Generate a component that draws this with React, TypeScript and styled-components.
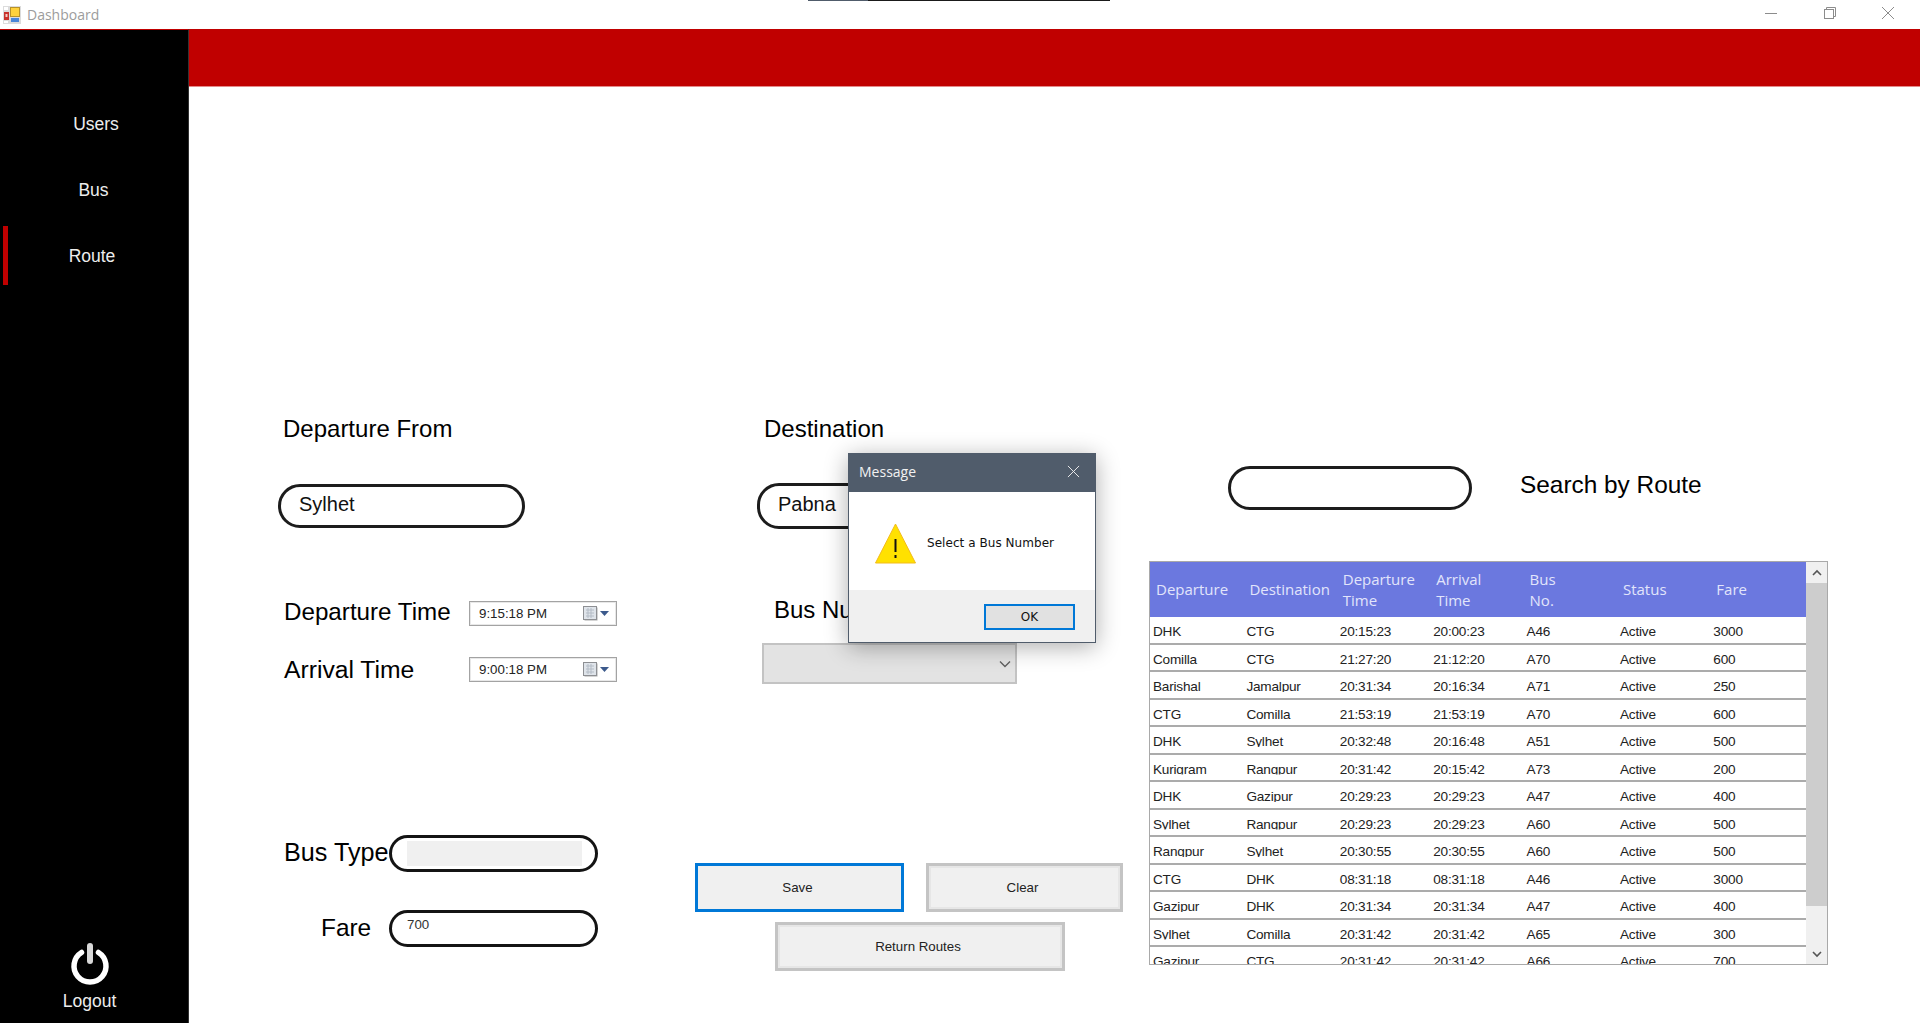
import styled, { createGlobalStyle } from 'styled-components'

type RouteRow = [string, string, string, string, string, string, string]

const routes: RouteRow[] = [
  ['DHK', 'CTG', '20:15:23', '20:00:23', 'A46', 'Active', '3000'],
  ['Comilla', 'CTG', '21:27:20', '21:12:20', 'A70', 'Active', '600'],
  ['Barishal', 'Jamalpur', '20:31:34', '20:16:34', 'A71', 'Active', '250'],
  ['CTG', 'Comilla', '21:53:19', '21:53:19', 'A70', 'Active', '600'],
  ['DHK', 'Sylhet', '20:32:48', '20:16:48', 'A51', 'Active', '500'],
  ['Kurigram', 'Rangpur', '20:31:42', '20:15:42', 'A73', 'Active', '200'],
  ['DHK', 'Gazipur', '20:29:23', '20:29:23', 'A47', 'Active', '400'],
  ['Sylhet', 'Rangpur', '20:29:23', '20:29:23', 'A60', 'Active', '500'],
  ['Rangpur', 'Sylhet', '20:30:55', '20:30:55', 'A60', 'Active', '500'],
  ['CTG', 'DHK', '08:31:18', '08:31:18', 'A46', 'Active', '3000'],
  ['Gazipur', 'DHK', '20:31:34', '20:31:34', 'A47', 'Active', '400'],
  ['Sylhet', 'Comilla', '20:31:42', '20:31:42', 'A65', 'Active', '300'],
  ['Gazipur', 'CTG', '20:31:42', '20:31:42', 'A66', 'Active', '700'],
]

const columns = [
  'Departure',
  'Destination',
  'Departure Time',
  'Arrival Time',
  'Bus No.',
  'Status',
  'Fare',
]

const GlobalStyle = createGlobalStyle`
  html, body {
    margin: 0;
    padding: 0;
    height: 100%;
    overflow: hidden;
    background: #fff;
    font-family: 'Liberation Sans', Arial, sans-serif;
  }
  * {
    box-sizing: border-box;
  }
`

const Window = styled.div`
  position: relative;
  width: 1920px;
  height: 1023px;
  display: flex;
  flex-direction: column;
  overflow: hidden;
`

const TitleBar = styled.div`
  position: relative;
  height: 29px;
  flex: none;
  display: flex;
  align-items: center;
  padding-left: 3px;
  background: #fff;
`

const TitleText = styled.span`
  margin-left: 6px;
  font-family: 'Open Sans', sans-serif;
  font-size: 14px;
  color: #9c9c9c;
`

const TopEdge = styled.div`
  position: absolute;
  left: 808px;
  top: 0;
  width: 302px;
  height: 1px;
  background: linear-gradient(90deg, #505c6b 0 60px, #1a1a1a 60px);
`

const WindowControls = styled.div`
  margin-left: auto;
  display: flex;
  padding: 0 25px 3px 0;
  gap: 44.5px;
`

const Body = styled.div`
  flex: 1;
  display: flex;
  min-height: 0;
`

const Sidebar = styled.nav`
  width: 189px;
  flex: none;
  padding-top: 61px;
  display: flex;
  flex-direction: column;
  background: #000;
  border-top: 1px solid #c00000;
  border-right: 1px solid #333;
`

const NavItem = styled.div<{ $shift: number; $active?: boolean }>`
  position: relative;
  height: 66px;
  display: flex;
  align-items: center;
  justify-content: center;
  font-size: 17.5px;
  color: #ededed;
  padding-left: ${(props) => (props.$shift > 0 ? props.$shift : 0)}px;
  padding-right: ${(props) => (props.$shift < 0 ? -props.$shift : 0)}px;

  &::before {
    content: '';
    display: ${(props) => (props.$active ? 'block' : 'none')};
    position: absolute;
    left: 3px;
    top: 3px;
    width: 5px;
    height: 59px;
    background: #c00000;
  }
`

const Logout = styled.div`
  margin-top: auto;
  padding: 0 9px 11px 0;
  display: flex;
  flex-direction: column;
  align-items: center;
  gap: 6px;
  font-size: 17.5px;
  color: #ededed;
`

const Main = styled.main`
  flex: 1;
  min-width: 0;
  display: flex;
  flex-direction: column;
`

const RedBar = styled.header`
  height: 58px;
  flex: none;
  background: #c00000;
  border-bottom: 1px solid #e58a8a;
`

const Content = styled.div`
  flex: 1;
  display: grid;
  grid-template-columns: 417px 454px 691px;
  padding: 324px 0 0 89px;
`

const Column = styled.section`
  display: flex;
  flex-direction: column;
  align-items: flex-start;
`

const FieldLabel = styled.label<{ $indent?: number; $top?: number; $size?: number }>`
  display: block;
  margin-left: ${(props) => props.$indent ?? 0}px;
  margin-top: ${(props) => props.$top ?? 0}px;
  font-size: ${(props) => props.$size ?? 24}px;
  line-height: 36px;
  color: #000;
  white-space: nowrap;
`

const Pill = styled.div<{ $width: number; $height: number; $top: number; $indent?: number }>`
  width: ${(props) => props.$width}px;
  height: ${(props) => props.$height}px;
  margin-top: ${(props) => props.$top}px;
  margin-left: ${(props) => props.$indent ?? 0}px;
  flex: none;
  display: flex;
  align-items: center;
  padding: 0 0 3px 18px;
  border: 3px solid #1c1c1c;
  border-radius: 22px;
  background: #fff;
  font-size: 20px;
  color: #111;
`

const TimeRow = styled.div<{ $top: number }>`
  display: flex;
  align-items: center;
  height: 25px;
  margin-top: ${(props) => props.$top}px;
  padding-left: 6px;
`

const TimeLabel = styled(FieldLabel)<{ $raise: number }>`
  width: 185px;
  line-height: 25px;
  position: relative;
  top: ${(props) => -props.$raise}px;
`

const TimePicker = styled.div`
  width: 148px;
  height: 25px;
  display: flex;
  align-items: center;
  padding: 0 7px 0 9px;
  border: 1px solid #a3a3a3;
  box-shadow: inset 0 0 0 1px #e8e8e8;
  font-size: 13.3px;
  color: #222;
`

const TimeValue = styled.span`
  flex: 1;
`

const FormRow = styled.div<{ $top: number }>`
  display: flex;
  align-items: center;
  height: 37px;
  margin-top: ${(props) => props.$top}px;
  padding-left: 6px;
`

const RowLabel = styled(FieldLabel)<{ $raise: number; $width: number }>`
  width: ${(props) => props.$width}px;
  position: relative;
  top: ${(props) => -props.$raise}px;
`

const RoundInput = styled.div<{ $align?: string }>`
  width: 209px;
  height: 37px;
  padding: 0 13px 0 15px;
  display: flex;
  align-items: ${(props) => props.$align ?? 'center'};
  border: 3px solid #141414;
  border-radius: 19px;
  font-size: 13.3px;
  color: #333;
`

const DisabledFill = styled.div`
  width: 100%;
  height: 25px;
  background: #f0f0f0;
`

const FareValue = styled.span`
  margin-top: 4px;
`

const ComboBox = styled.div`
  width: 255px;
  height: 41px;
  margin: 15px 0 0 67px;
  display: flex;
  align-items: center;
  justify-content: flex-end;
  padding-right: 4px;
  background: #e3e3e3;
  border: 2px solid #c3c3c3;
`

const ActionRow = styled.div`
  display: flex;
  gap: 22px;
  margin-top: 179px;
`

const ActionButton = styled.button<{ $width: number; $focused?: boolean; $indent?: number; $top?: number }>`
  width: ${(props) => props.$width}px;
  height: 49px;
  margin-left: ${(props) => props.$indent ?? 0}px;
  margin-top: ${(props) => props.$top ?? 0}px;
  padding: 0 4px 0 0;
  background: #f0f0f0;
  border: ${(props) => (props.$focused ? '3px solid #0078d7' : '3px solid #c4c4c4')};
  box-shadow: ${(props) => (props.$focused ? 'none' : 'inset 0 0 0 2px #e6e6e6')};
  font-family: 'Liberation Sans', Arial, sans-serif;
  font-size: 13.3px;
  color: #222;
`

const SearchRow = styled.div`
  display: flex;
  align-items: flex-start;
  margin-top: 55px;
`

const SearchLabel = styled(FieldLabel)`
  margin: 1px 0 0 48px;
  font-size: 24.4px;
`

const Grid = styled.div`
  display: flex;
  width: 679px;
  height: 404px;
  margin-top: 51px;
  border: 1px solid #a9a9a9;
  overflow: hidden;
`

const Rows = styled.div`
  width: 656px;
  flex: none;
  overflow: hidden;
`

const HeaderRow = styled.div`
  display: grid;
  grid-template-columns: repeat(7, 93.4px);
  height: 55px;
  align-items: center;
  background: #6b78df;
`

const HeaderCell = styled.div`
  width: min-content;
  padding-left: 6px;
  font-family: 'Open Sans', sans-serif;
  font-size: 15px;
  line-height: 21px;
  color: #e2e5fb;
`

const DataRow = styled.div`
  display: grid;
  grid-template-columns: repeat(7, 93.4px);
  height: 27.5px;
  border-bottom: 2px solid #ababab;
  background: #fff;
`

// the grid cuts descenders off in the original app
const DataCell = styled.div`
  height: 20px;
  margin-top: 5px;
  padding-left: 3px;
  clip-path: inset(0 0 5px 0);
  font-size: 13.6px;
  line-height: 20px;
  letter-spacing: -0.2px;
  color: #222;
`

const ScrollBar = styled.div`
  flex: 1;
  display: flex;
  flex-direction: column;
  align-items: center;
  background: #f0f0f0;
`

const ScrollArrow = styled.div<{ $bottom?: boolean }>`
  height: 21px;
  flex: none;
  display: flex;
  align-items: center;
  justify-content: center;
  margin-top: ${(props) => (props.$bottom ? 'auto' : '0')};
`

const ScrollThumb = styled.div`
  width: 100%;
  height: 323px;
  background: #cdcdcd;
`

const Dialog = styled.div`
  position: absolute;
  left: 848px;
  top: 453px;
  width: 248px;
  height: 190px;
  display: flex;
  flex-direction: column;
  background: #fff;
  border: 1px solid #505c6b;
  box-shadow: 0 4px 22px rgba(0, 0, 0, 0.32);
`

const DialogTitle = styled.div`
  height: 38px;
  flex: none;
  display: flex;
  align-items: center;
  justify-content: space-between;
  padding: 0 15px 3px 10px;
  background: #505c6b;
  font-family: 'Open Sans', sans-serif;
  font-size: 14px;
  color: #f2f2f2;
`

const DialogBody = styled.div`
  flex: 1;
  display: flex;
  align-items: center;
  gap: 11px;
  padding: 4px 0 0 26px;
  font-family: 'DejaVu Sans', sans-serif;
  font-size: 12px;
  letter-spacing: 0.05px;
  color: #111;
`

const DialogFooter = styled.div`
  height: 52px;
  flex: none;
  display: flex;
  align-items: flex-start;
  justify-content: flex-end;
  padding: 14px 20px 0 0;
  background: #f0f0f0;
`

const OkButton = styled.button`
  width: 91px;
  height: 26px;
  padding: 0;
  background: #e1e1e1;
  border: 2px solid #0078d7;
  font-family: 'DejaVu Sans', sans-serif;
  font-size: 12px;
  color: #111;
`

const AppIcon = () => (
  <svg width="18" height="18" viewBox="0 0 18 18">
    <rect x="0" y="0" width="18" height="18" fill="#dcdcdc" />
    <rect x="1" y="1" width="4" height="3" fill="#fff" />
    <rect x="1" y="6" width="5" height="8" fill="#c8322c" />
    <rect x="2.5" y="8" width="2" height="3" fill="#f3d0c8" />
    <rect x="1" y="15" width="4" height="2" fill="#fff" />
    <rect x="7" y="1" width="10" height="10" fill="#b8922a" />
    <rect x="8" y="2" width="8" height="8" fill="#ffd23c" />
    <rect x="8" y="12" width="8" height="4" fill="#4a86d8" />
  </svg>
)

const MinimizeIcon = () => (
  <svg width="14" height="14" viewBox="0 0 14 14">
    <path d="M1 7.5h12" stroke="#8c8c8c" strokeWidth="1" />
  </svg>
)

const RestoreIcon = () => (
  <svg width="14" height="14" viewBox="0 0 14 14" fill="none" stroke="#8c8c8c">
    <rect x="1.5" y="3.5" width="9" height="9" />
    <path d="M3.5 3.5v-2h9v9h-2" />
  </svg>
)

const CloseIcon = ({ color, size }: { color: string; size: number }) => (
  <svg width={size} height={size} viewBox="0 0 14 14" fill="none" stroke={color}>
    <path d="M1 1l12 12M13 1L1 13" />
  </svg>
)

const PowerIcon = () => (
  <svg width="40" height="42" viewBox="0 0 40 42" fill="none">
    <path
      d="M11.5 9.5a16 16 0 1 0 17 0"
      stroke="#fff"
      strokeWidth="5.5"
      strokeLinecap="round"
    />
    <path d="M20 3v15" stroke="#d8d8d8" strokeWidth="6" strokeLinecap="round" />
  </svg>
)

const CalendarIcon = () => (
  <svg width="26" height="15" viewBox="0 0 26 15">
    <rect x="1.5" y="1.5" width="13" height="13" fill="#a9a9a9" />
    <rect x="0.5" y="0.5" width="13" height="13" fill="#dfe4ea" stroke="#8d8f93" />
    <path d="M3 4h8M3 7h8M3 10h8M5 2v10M8 2v10" stroke="#b4bcc6" />
    <path d="M17 5h9l-4.5 5z" fill="#3c5a8c" />
  </svg>
)

const ChevronIcon = () => (
  <svg width="12" height="8" viewBox="0 0 12 8" fill="none" stroke="#606060" strokeWidth="1.4">
    <path d="M1 1.5l5 5 5-5" />
  </svg>
)

const WarningIcon = () => (
  <svg width="41" height="41" viewBox="0 0 41 41">
    <path d="M20.5 1L40.5 40H.5z" fill="#ffe100" stroke="#f2bb1a" strokeLinejoin="round" />
    <path d="M20.5 16v13" stroke="#111" strokeWidth="2" />
    <rect x="19.5" y="32" width="2" height="3" fill="#111" />
  </svg>
)

const ArrowIcon = ({ down }: { down?: boolean }) => (
  <svg width="10" height="8" viewBox="0 0 10 8" fill="none" stroke="#555" strokeWidth="1.6">
    <path d={down ? 'M1 2l4 4 4-4' : 'M1 6l4-4 4 4'} />
  </svg>
)

const App = () => {
  return (
    <Window>
      <GlobalStyle />
      <TitleBar>
        <AppIcon />
        <TitleText>Dashboard</TitleText>
        <TopEdge />
        <WindowControls>
          <MinimizeIcon />
          <RestoreIcon />
          <CloseIcon color="#8c8c8c" size={14} />
        </WindowControls>
      </TitleBar>
      <Body>
        <Sidebar>
          <NavItem $shift={4}>Users</NavItem>
          <NavItem $shift={-1}>Bus</NavItem>
          <NavItem $shift={-4} $active>
            Route
          </NavItem>
          <Logout>
            <PowerIcon />
            Logout
          </Logout>
        </Sidebar>
        <Main>
          <RedBar />
          <Content>
            <Column>
              <FieldLabel $indent={5}>Departure From</FieldLabel>
              <Pill $width={247} $height={44} $top={37}>
                Sylhet
              </Pill>
              <TimeRow $top={73}>
                <TimeLabel $raise={2} $size={24.2}>
                  Departure Time
                </TimeLabel>
                <TimePicker>
                  <TimeValue>9:15:18 PM</TimeValue>
                  <CalendarIcon />
                </TimePicker>
              </TimeRow>
              <TimeRow $top={31}>
                <TimeLabel $raise={0} $size={24.7}>
                  Arrival Time
                </TimeLabel>
                <TimePicker>
                  <TimeValue>9:00:18 PM</TimeValue>
                  <CalendarIcon />
                </TimePicker>
              </TimeRow>
              <FormRow $top={153}>
                <RowLabel $raise={2} $width={105} $size={25.2}>
                  Bus Type
                </RowLabel>
                <RoundInput>
                  <DisabledFill />
                </RoundInput>
              </FormRow>
              <FormRow $top={38}>
                <RowLabel $raise={1} $indent={37} $width={68} $size={24.4}>
                  Fare
                </RowLabel>
                <RoundInput $align="flex-start">
                  <FareValue>700</FareValue>
                </RoundInput>
              </FormRow>
            </Column>
            <Column>
              <FieldLabel $indent={69}>Destination</FieldLabel>
              <Pill $width={246} $height={46} $top={36} $indent={62}>
                Pabna
              </Pill>
              <FieldLabel $indent={79} $top={63}>
                Bus Number
              </FieldLabel>
              <ComboBox>
                <ChevronIcon />
              </ComboBox>
              <ActionRow>
                <ActionButton $width={209} $focused>
                  Save
                </ActionButton>
                <ActionButton $width={197}>Clear</ActionButton>
              </ActionRow>
              <ActionButton $width={290} $indent={80} $top={10}>
                Return Routes
              </ActionButton>
            </Column>
            <Column>
              <SearchRow>
                <Pill $width={244} $height={44} $top={0} $indent={79} />
                <SearchLabel>Search by Route</SearchLabel>
              </SearchRow>
              <Grid>
                <Rows>
                  <HeaderRow>
                    {columns.map((name) => (
                      <HeaderCell key={name}>{name}</HeaderCell>
                    ))}
                  </HeaderRow>
                  {routes.map((route, index) => (
                    <DataRow key={index}>
                      {route.map((value, cellIndex) => (
                        <DataCell key={cellIndex}>{value}</DataCell>
                      ))}
                    </DataRow>
                  ))}
                </Rows>
                <ScrollBar>
                  <ScrollArrow>
                    <ArrowIcon />
                  </ScrollArrow>
                  <ScrollThumb />
                  <ScrollArrow $bottom>
                    <ArrowIcon down />
                  </ScrollArrow>
                </ScrollBar>
              </Grid>
            </Column>
          </Content>
        </Main>
      </Body>
      <Dialog>
        <DialogTitle>
          Message
          <CloseIcon color="#f2f2f2" size={13} />
        </DialogTitle>
        <DialogBody>
          <WarningIcon />
          Select a Bus Number
        </DialogBody>
        <DialogFooter>
          <OkButton>OK</OkButton>
        </DialogFooter>
      </Dialog>
    </Window>
  )
}

export default App
